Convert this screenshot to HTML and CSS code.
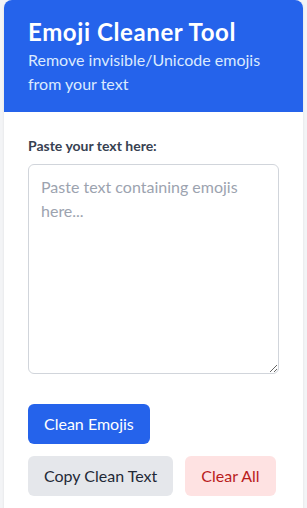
FILE: index.html
```html
<!DOCTYPE html>
<html lang="en">

<head>
    <meta charset="UTF-8">
    <meta name="viewport" content="width=device-width, initial-scale=1.0">
    <title>Emoji Cleaner Tool</title>
    <link rel="stylesheet" href="styles.css">
</head>

<body>
    <div class="card">
        <header class="card-header">
            <h1>Emoji Cleaner Tool</h1>
            <p class="subtitle">Remove invisible/Unicode emojis from your text</p>
        </header>

        <div class="card-body">
            <label class="field-label" for="inputText">Paste your text here:</label>
            <textarea id="inputText" class="text-input" placeholder="Paste text containing emojis here..."></textarea>

            <div class="actions">
                <button class="btn btn-primary">Clean Emojis</button>
                <button class="btn btn-gray">Copy Clean Text</button>
                <button class="btn btn-danger">Clear All</button>
            </div>
        </div>
    </div>
</body>

</html>
```

FILE: styles.css
```css
body {
    font-family: Lato, 'Noto Sans', sans-serif;
    margin: 0;
    padding: 0 4px;
    background-color: #f3f4f6;
    color: #1f2937;
}

.card {
    background-color: white;
    border-radius: 8px 8px 0 0;
    overflow: hidden;
    box-shadow: 0 1px 3px rgba(0, 0, 0, 0.08);
}

.card-header {
    background-color: #2563eb;
    color: white;
    padding: 16px 24px;
}

.card-header h1 {
    margin: 0;
    font-size: 24px;
    line-height: 32px;
    font-weight: 700;
    letter-spacing: 0.6px;
}

.subtitle {
    margin: 0;
    font-size: 16px;
    line-height: 24px;
    color: #dbeafe;
}

.card-body {
    padding: 24px;
}

.field-label {
    display: block;
    font-size: 14px;
    line-height: 20px;
    font-weight: 700;
    color: #374151;
    margin-bottom: 8px;
}

.text-input {
    display: block;
    box-sizing: border-box;
    width: 100%;
    height: 210px;
    padding: 10px 12px;
    border: 1px solid #d1d5db;
    border-radius: 6px;
    font-family: inherit;
    font-size: 16px;
    line-height: 24px;
    color: #1f2937;
    margin-bottom: 30px;
}

.text-input::placeholder {
    color: #9ca3af;
}

.actions {
    display: flex;
    flex-wrap: wrap;
    gap: 12px;
}

.btn {
    border: none;
    border-radius: 6px;
    padding: 8px 16px;
    font-family: inherit;
    font-size: 16px;
    line-height: 24px;
    cursor: pointer;
}

.btn-primary {
    background-color: #2563eb;
    color: white;
}

.btn-gray {
    background-color: #e5e7eb;
    color: #1f2937;
}

.btn-danger {
    background-color: #fee2e2;
    color: #b91c1c;
}
```
